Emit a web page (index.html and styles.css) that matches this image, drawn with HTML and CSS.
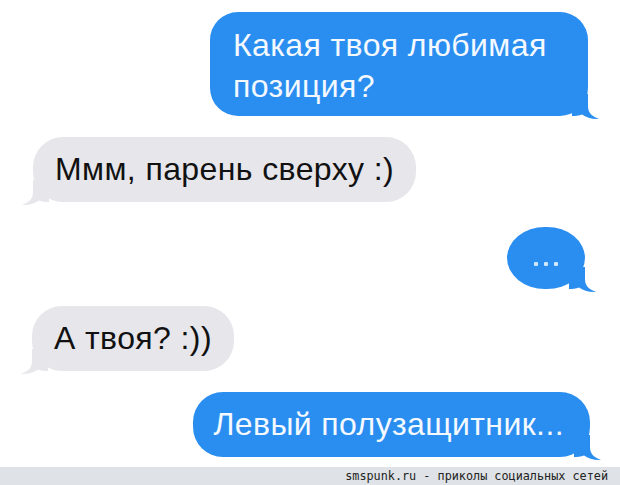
FILE: index.html
```html
<!DOCTYPE html>
<html lang="ru">
<head>
  <meta charset="UTF-8">
  <title>Переписка</title>
  <link rel="stylesheet" href="styles.css">
</head>
<body>

<div class="chat">
  <div class="row out first">
    <div class="bubble blue wide">
      Какая твоя любимая позиция?
      <svg class="tail" viewBox="0 0 28 26" width="28" height="26"><path d="M16 0 L16 12 C16 18 19 22 27 25 C20 25.4 14 23.5 10 20.5 C7 21.6 3 22 0 22 L0 0 Z"/></svg>
    </div>
  </div>

  <div class="row in second">
    <div class="bubble gray">
      Ммм, парень сверху :)
      <svg class="tail" viewBox="0 0 28 26" width="28" height="26"><path d="M16 0 L16 12 C16 18 19 22 27 25 C20 25.4 14 23.5 10 20.5 C7 21.6 3 22 0 22 L0 0 Z"/></svg>
    </div>
  </div>

  <div class="row out third">
    <div class="bubble blue dots">
      <span class="dot"></span><span class="dot"></span><span class="dot"></span>
      <svg class="tail" viewBox="0 0 28 26" width="28" height="26"><path d="M16 0 L16 12 C16 18 19 22 27 25 C20 25.4 14 23.5 10 20.5 C7 21.6 3 22 0 22 L0 0 Z"/></svg>
    </div>
  </div>

  <div class="row in fourth">
    <div class="bubble gray">
      А твоя? :))
      <svg class="tail" viewBox="0 0 28 26" width="28" height="26"><path d="M16 0 L16 12 C16 18 19 22 27 25 C20 25.4 14 23.5 10 20.5 C7 21.6 3 22 0 22 L0 0 Z"/></svg>
    </div>
  </div>

  <div class="row out fifth">
    <div class="bubble blue">
      Левый полузащитник...
      <svg class="tail" viewBox="0 0 28 26" width="28" height="26"><path d="M16 0 L16 12 C16 18 19 22 27 25 C20 25.4 14 23.5 10 20.5 C7 21.6 3 22 0 22 L0 0 Z"/></svg>
    </div>
  </div>
</div>

<footer class="credit">smspunk.ru - приколы социальных сетей</footer>

</body>
</html>
```

FILE: styles.css
```css
body {
  margin: 0;
  padding: 0;
  background: #fff;
  font-family: "Liberation Sans", Arial, sans-serif;
  width: 620px;
  height: 485px;
  overflow: hidden;
  display: flex;
  flex-direction: column;
}
.chat {
  flex: 1;
  display: flex;
  flex-direction: column;
}
.row {
  display: flex;
}
.row.out {
  justify-content: flex-end;
}
.row.in {
  justify-content: flex-start;
}
.first { margin-top: 12px; padding-right: 32px; }
.second { margin-top: 21px; padding-left: 33px; }
.third { margin-top: 25px; padding-right: 35px; }
.fourth { margin-top: 17px; padding-left: 32px; }
.fifth { margin-top: 21px; padding-right: 30px; }

.bubble {
  position: relative;
  box-sizing: border-box;
  font-size: 32px;
  letter-spacing: 0.4px;
  line-height: 41px;
  padding: 12px 22px 12px 22px;
  border-radius: 30px;
}
.bubble.blue {
  background: #2a8ef0;
  color: #f4f9ff;
}
.bubble.gray {
  background: #e6e6eb;
  color: #111;
}
.bubble.wide {
  width: 378px;
  padding: 13px 20px 9px 23px;
  border-radius: 28px;
}
.fifth .bubble {
  padding: 12px 26px 12px 20px;
}
.bubble.dots {
  width: 78px;
  height: 62px;
  padding: 12px 0 0;
  border-radius: 38px / 31px;
  display: flex;
  align-items: center;
  justify-content: center;
  gap: 6px;
}
.dot {
  width: 4px;
  height: 4px;
  border-radius: 1px;
  background: #cfe7ff;
}
.tail {
  position: absolute;
  bottom: -4px;
  display: block;
}
.blue .tail {
  right: -12px;
  fill: #2a8ef0;
}
.gray .tail {
  left: -12px;
  fill: #e6e6eb;
  transform: scaleX(-1);
}
.credit {
  height: 18px;
  background: #dfe2e6;
  color: #222;
  font-family: "DejaVu Sans Mono", monospace;
  font-size: 11.8px;
  line-height: 18px;
  text-align: right;
  padding-right: 12px;
}
```
